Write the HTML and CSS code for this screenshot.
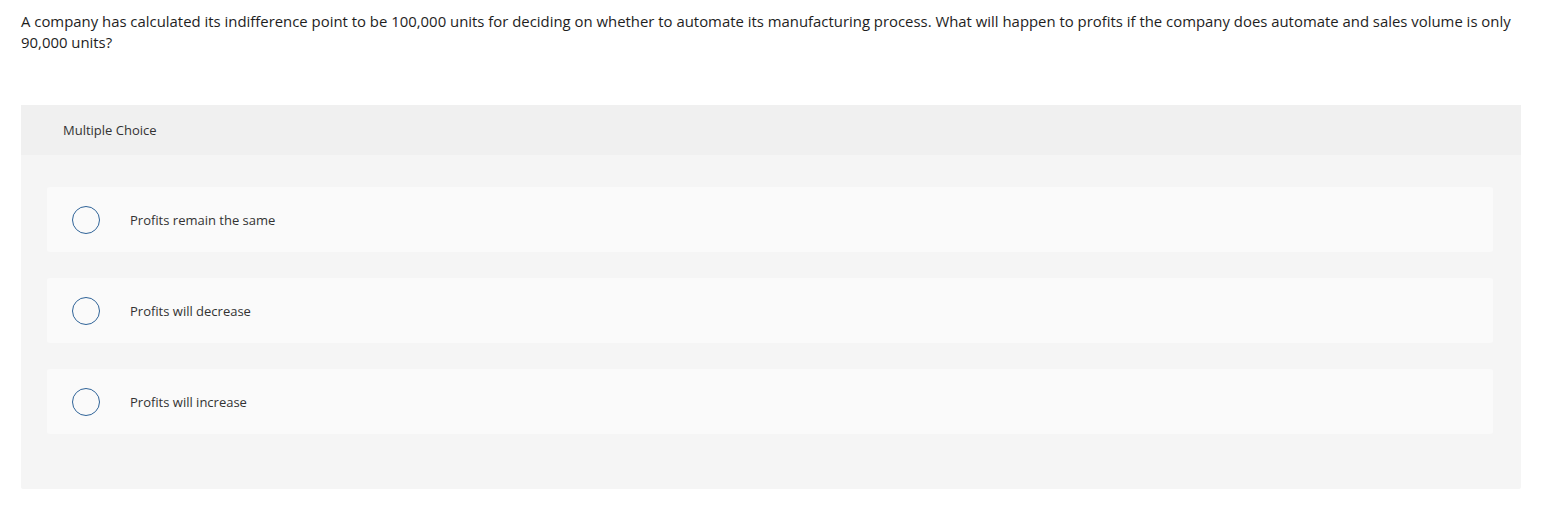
FILE: index.html
```html
<!DOCTYPE html>
<html>
<head>
<meta charset="utf-8">
<link rel="stylesheet" href="styles.css">
</head>
<body>
<div class="page">
  <p class="question">A company has calculated its indifference point to be 100,000 units for deciding on whether to automate its manufacturing process. What will happen to profits if the company does automate and sales volume is only 90,000 units?</p>
  <div class="panel">
    <div class="panel-head">Multiple Choice</div>
    <div class="panel-body">
      <div class="option"><span class="radio"></span><span class="label">Profits remain the same</span></div>
      <div class="option"><span class="radio"></span><span class="label">Profits will decrease</span></div>
      <div class="option"><span class="radio"></span><span class="label">Profits will increase</span></div>
    </div>
  </div>
</div>
</body>
</html>
```
FILE: styles.css
```css
html, body {
  margin: 0;
  padding: 0;
  background: #ffffff;
}
body {
  font-family: "Open Sans", "Liberation Sans", sans-serif;
  color: #222;
}
.page {
  padding: 11px 21px 0 21px;
  width: 1500px;
}
.question {
  margin: 0;
  font-size: 14.9px;
  line-height: 21px;
  color: #1e1e1e;
}
.panel {
  margin-top: 52px;
  width: 1500px;
  background: #f5f5f5;
  border-radius: 2px;
}
.panel-head {
  height: 50px;
  background: #f0f0f0;
  display: flex;
  align-items: center;
  padding-left: 42px;
  font-size: 13px;
  color: #333;
}
.panel-body {
  padding: 32px 28px 55px 26px;
  display: flex;
  flex-direction: column;
  gap: 26px;
}
.option {
  height: 65px;
  background: #fafafa;
  border-radius: 3px;
  display: flex;
  align-items: center;
  padding-left: 25px;
}
.radio {
  width: 26px;
  height: 26px;
  border: 1.5px solid #2f6398;
  border-radius: 50%;
  box-sizing: content-box;
  flex: none;
}
.label {
  margin-left: 30px;
  font-size: 13px;
  color: #333;
}
```
